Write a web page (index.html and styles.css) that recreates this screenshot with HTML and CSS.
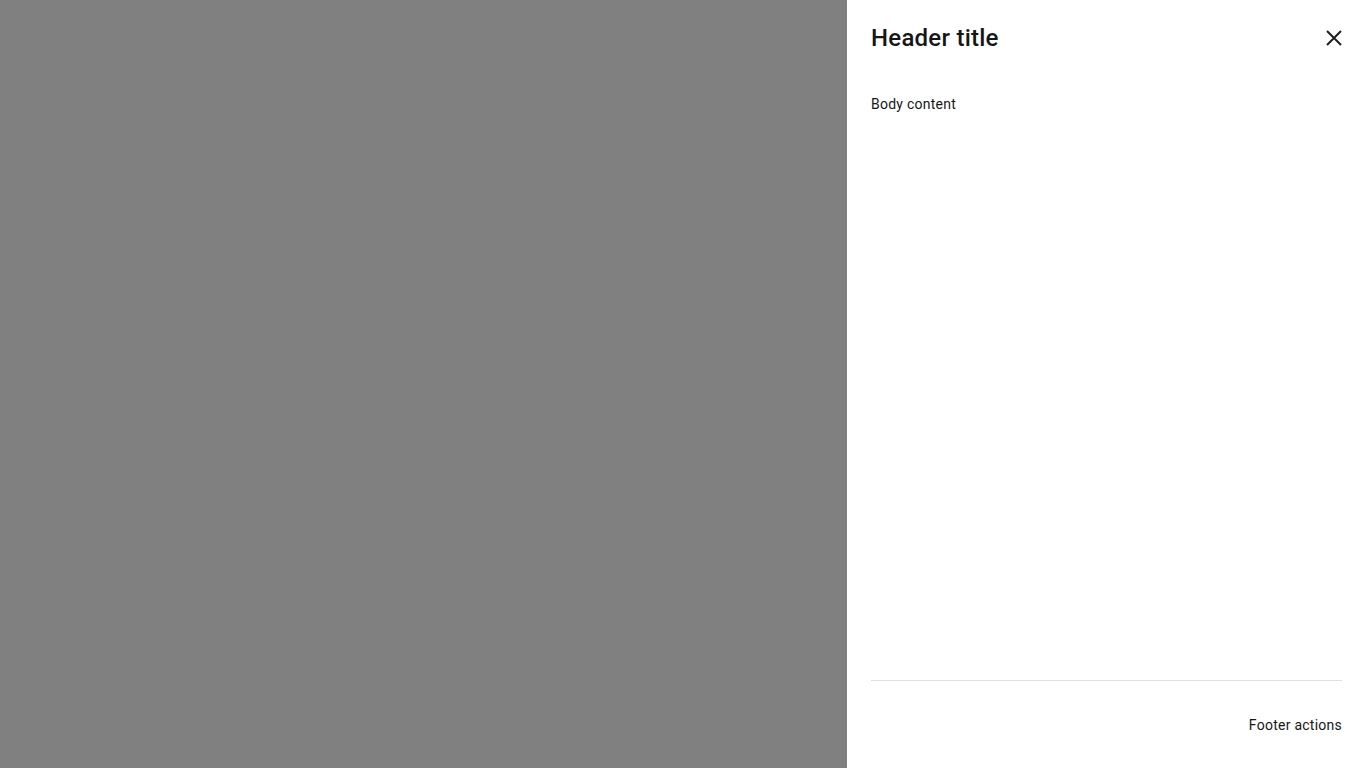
FILE: index.html
```html
<!DOCTYPE html>
<html>
<head>
<meta charset="utf-8">
<link rel="stylesheet" href="styles.css">
</head>
<body>
<div class="page">
  <div class="backdrop"></div>
  <aside class="drawer">
    <header class="drawer-header">
      <h2 class="drawer-title">Header title</h2>
      <button class="close-btn" aria-label="Close">
        <svg width="24" height="24" viewBox="0 0 24 24"><path d="M5 5 L19 19 M19 5 L5 19" stroke="#1f1f1f" stroke-width="2" fill="none"/></svg>
      </button>
    </header>
    <div class="drawer-body">Body content</div>
    <footer class="drawer-footer">Footer actions</footer>
  </aside>
</div>
</body>
</html>
```

FILE: styles.css
```css
* { box-sizing: border-box; }
html, body { margin: 0; padding: 0; }
body { font-family: Roboto, "Liberation Sans", sans-serif; color: #161616; }
.page { display: flex; width: 1366px; height: 768px; background: #808080; }
.backdrop { flex: 1; background: #808080; }
.drawer { width: 519px; background: #fff; display: flex; flex-direction: column; }
.drawer-header { display: flex; align-items: center; justify-content: space-between; padding: 24px 20px 24px 24px; height: 76px; }
.drawer-title { margin: 0; font-size: 24px; font-weight: 500; line-height: 28px; letter-spacing: 0.25px; color: #161616; }
.close-btn { border: 0; background: none; padding: 0; width: 24px; height: 24px; display: flex; cursor: pointer; }
.drawer-body { flex: 1; margin: 0 24px; padding-top: 18px; font-size: 14px; line-height: 20px; letter-spacing: 0.25px; border-bottom: 1px solid #e0e0e0; }
.drawer-footer { height: 87px; padding: 0 24px; display: flex; align-items: center; justify-content: flex-end; font-size: 14px; line-height: 20px; letter-spacing: 0.25px; }
```
